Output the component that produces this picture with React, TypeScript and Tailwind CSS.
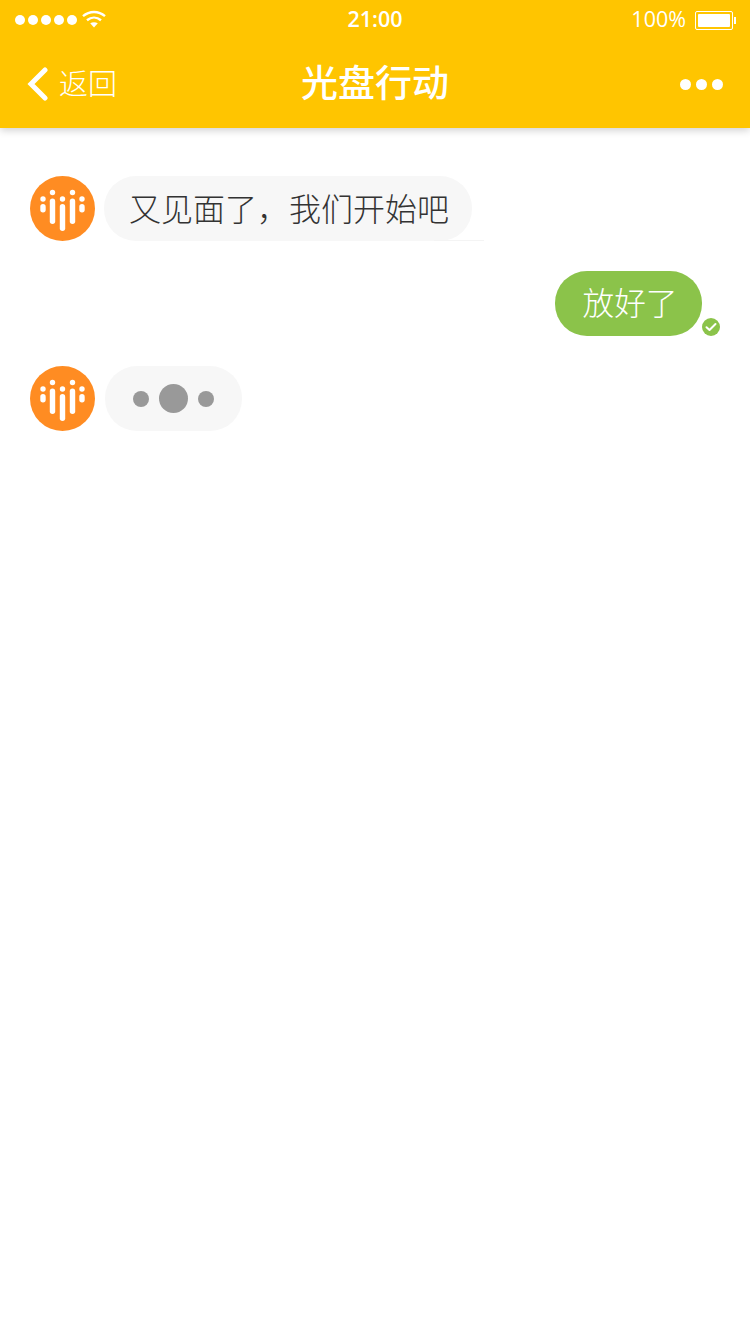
const cjk = "font-['Noto_Sans_CJK_SC','Noto_Sans',sans-serif]"

function BotAvatar() {
	// bars: x centre, dot y, bar top, bar bottom
	const bars = [
		[13, 23, 28, 36.500],
		[22.5, 16.5, 22.500, 48],
		[32.5, 23, 28, 55],
		[42.5, 16.5, 22.500, 48],
		[52, 23, 28, 36.500],
	]
	return (
		<svg width="65" height="65" viewBox="0 0 65 65" className="shrink-0">
			<circle cx="32.5" cy="32.5" r="32.5" fill="#ff8c22" />
			{bars.map(([x, dot, top, bottom]) => (
				<g key={x} fill="#fff">
					<circle cx={x} cy={dot} r="2.7" />
					<rect x={x - 2.7} y={top} width="5.4" height={bottom - top} rx="2.7" />
				</g>
			))}
		</svg>
	)
}

function StatusBar() {
	return (
		<div className="relative flex h-10 items-center justify-between pl-[15px] pr-[14px] font-['Open_Sans',sans-serif] text-[21.5px] font-semibold text-white">
			<div className="flex items-center">
				<div className="flex gap-[3px]">
					{[1, 2, 3, 4, 5].map((i) => (
						<span key={i} className="size-[10px] rounded-full bg-white" />
					))}
				</div>
				<svg width="24" height="18" viewBox="0 0 24 18" className="mb-[3px] ml-[5px]" fill="none" stroke="#fff" strokeWidth="2.4">
					<path d="M1 6.2C7.4 .6 16.6 .6 23 6.2" />
					<path d="M5 10.2C9.2 6.8 14.8 6.8 19 10.2" />
					<path d="M12 17.5l-3.8-4.2c2.300-1.500 5.300-1.500 7.600 0z" fill="#fff" stroke="none" />
				</svg>
			</div>
			<span className="absolute left-0 right-0 pb-[2px] text-center">21:00</span>
			<div className="flex items-center">
				<span className="pb-[2px] font-medium">100%</span>
				<div className="ml-[9px] flex h-[19px] w-[38px] rounded-[2px] border border-white p-[2px]">
					<div className="flex-1 rounded-[1px] bg-white" />
				</div>
				<div className="ml-px h-[7px] w-[2px] bg-white" />
			</div>
		</div>
	)
}

function NavBar() {
	return (
		<div className={`relative flex h-[88px] items-center justify-between pl-[27px] pr-[27px] text-white ${cjk}`}>
			<div className="flex items-center">
				<svg width="21" height="34" viewBox="0 0 21 34" fill="none" stroke="#fff" strokeWidth="5" strokeLinecap="round">
					<path d="M18 3L4 17l14 14" />
				</svg>
				<span className="ml-[11px] pb-1 text-[29px] font-light leading-none">返回</span>
			</div>
			<span className="absolute left-0 right-0 pb-1 text-center text-[37px] font-medium">光盘行动</span>
			<div className="flex gap-[5px]">
				<span className="size-[11px] rounded-full bg-white" />
				<span className="size-[11px] rounded-full bg-white" />
				<span className="size-[11px] rounded-full bg-white" />
			</div>
		</div>
	)
}

export default function App() {
	return (
		<div className="min-h-[1334px] bg-white">
			<header className="relative bg-[#ffc500] shadow-[0_2px_8px_rgba(0,0,0,0.2)]">
				<StatusBar />
				<NavBar />
			</header>

			<main className={`flex flex-col gap-[30px] px-[30px] pt-12 ${cjk}`}>
				<div className="flex items-center gap-[9px]">
					<BotAvatar />
					<div className="relative flex h-[65px] w-[368px] items-center rounded-[32px] bg-[#f7f7f7] pb-[3px] pl-[25px] text-[32px] font-light text-[#333]">
						又见面了，我们开始吧
						<span className="absolute bottom-0 right-[-12px] h-px w-[50px] bg-[#f4f4f4]" />
					</div>
				</div>

				<div className="flex items-end justify-end">
					<div className="flex h-[65px] w-[147px] items-center justify-center rounded-[32px] bg-[#8bc34a] pb-[3px] pl-[3px] text-[31.7px] font-light text-white">
						放好了
					</div>
					<div className="flex size-[18px] items-center justify-center rounded-full bg-[#8bc34a]">
						<svg width="12" height="10" viewBox="0 0 12 10" fill="none" stroke="#fff" strokeWidth="2" strokeLinecap="round" strokeLinejoin="round">
							<path d="M1.500 5.200L4.500 8l6-6" />
						</svg>
					</div>
				</div>

				<div className="flex items-center gap-[10px]">
					<BotAvatar />
					<div className="flex h-[65px] w-[137px] items-center justify-center gap-[10px] rounded-[32px] bg-[#f7f7f7]">
						<span className="size-4 rounded-full bg-[#999]" />
						<span className="size-[29px] rounded-full bg-[#999]" />
						<span className="size-4 rounded-full bg-[#999]" />
					</div>
				</div>
			</main>
		</div>
	)
}
